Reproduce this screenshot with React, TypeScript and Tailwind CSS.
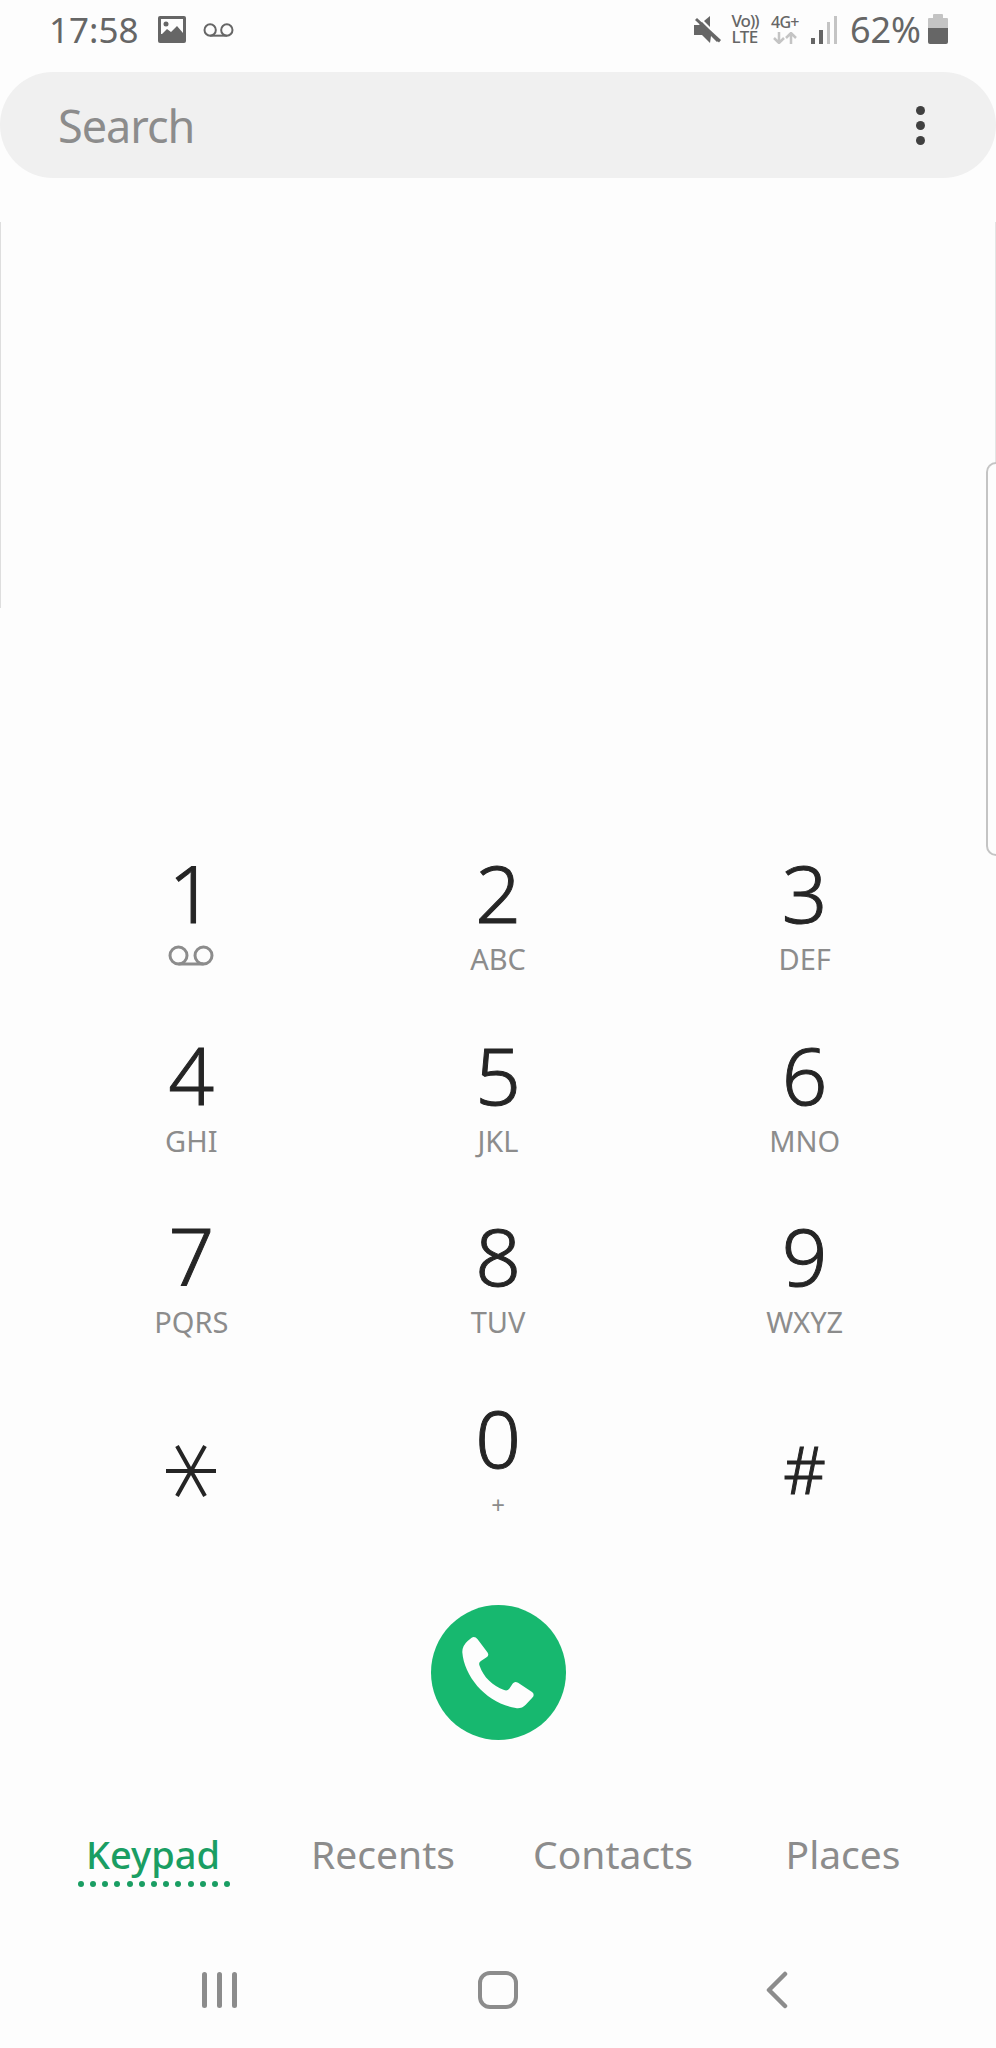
const FONT = 'font-["Noto_Sans",sans-serif]';

const keys = [
  { digit: '1', sub: 'vm' },
  { digit: '2', sub: 'ABC' },
  { digit: '3', sub: 'DEF' },
  { digit: '4', sub: 'GHI' },
  { digit: '5', sub: 'JKL' },
  { digit: '6', sub: 'MNO' },
  { digit: '7', sub: 'PQRS' },
  { digit: '8', sub: 'TUV' },
  { digit: '9', sub: 'WXYZ' },
];

const tabs = ['Keypad', 'Recents', 'Contacts', 'Places'];

function Voicemail({ className }: { className: string }) {
  return (
    <svg viewBox="0 0 46 21" fill="none" stroke="currentColor" strokeWidth="3" className={className}>
      <circle cx="10.5" cy="10.5" r="8.5" />
      <circle cx="35.5" cy="10.5" r="8.5" />
      <path d="M10.5 19h25" />
    </svg>
  );
}

function StatusBar() {
  return (
    <div className="flex h-[72px] items-start justify-between pl-[49px] pr-[48px] text-[#666666]">
      <div className="flex items-center">
        <span className="h-[60px] text-[35px] leading-[60px]">17:58</span>
        <svg viewBox="0 0 28 27" className="ml-[20px] mt-[-2px] h-[27px] w-[28px]">
          <rect x="0" y="0" width="28" height="27" rx="2" fill="#666666" />
          <rect x="3" y="3" width="22" height="15" fill="#fdfdfd" />
          <circle cx="8" cy="8" r="2.5" fill="#666666" />
          <path d="M3 19l6-6 4 3 6-6 6 7v3H3z" fill="#666666" />
        </svg>
        <Voicemail className="ml-[17px] mt-[-1px] h-[14px] w-[31px]" />
      </div>
      <div className="flex items-start">
        <svg viewBox="0 0 28 28" className="mt-[15px] h-[28px] w-[28px]" fill="#666666">
          <path d="M0 10h5l3-3 17 18-2 2-6-6-1 7-8-8H0z" />
          <path d="M16 1v11l-6-6z" />
          <path d="M3 3l24 22-2 2.500L1 5z" />
        </svg>
        <div className="ml-[9.5px] mt-[13px] flex w-[30px] flex-col items-start text-[17px] font-medium leading-[16px]">
          <span className="tracking-[-1px]">Vo))</span>
          <span className="tracking-[-0.5px]">LTE</span>
        </div>
        <div className="ml-[8px] mt-[14px] flex w-[31px] flex-col items-center">
          <span className="text-[16px] font-medium leading-[16px] tracking-[-0.8px]">4G+</span>
          <svg viewBox="0 0 28 12" className="mt-[2px] h-[12px] w-[28px]" fill="none" stroke="#c4c4c4" strokeWidth="2.500">
            <path d="M8 0v10M3 6l5 5 5-5" />
            <path d="M20 12V2M15 6l5-5 5 5" />
          </svg>
        </div>
        <div className="ml-[10.5px] mt-[14px] flex h-[30px] items-end gap-[4px]">
          <span className="h-[6px] w-[4px] bg-[#666666]" />
          <span className="h-[14px] w-[4px] bg-[#666666]" />
          <span className="h-[22px] w-[3px] bg-[#c4c4c4]" />
          <span className="h-[28px] w-[3px] bg-[#c4c4c4]" />
        </div>
        <span className="ml-[13px] h-[60px] text-[36px] leading-[60px]">62%</span>
        <div className="ml-[7px] mt-[14px] flex w-[20px] flex-col items-center">
          <span className="h-[4px] w-[10px] rounded-t-[1px] bg-[#c4c4c4]" />
          <span className="h-[10px] w-full rounded-t-[1px] bg-[#c4c4c4]" />
          <span className="h-[16px] w-full rounded-b-[2px] bg-[#666666]" />
        </div>
      </div>
    </div>
  );
}

function SearchBar() {
  return (
    <div className="flex h-[106px] items-center justify-between rounded-full bg-[#f0f0f0] pl-[58px] pr-[71px]">
      <span className="mt-[2px] text-[45px] leading-[104px] tracking-[-1px] text-[#8c8c8c]">Search</span>
      <div className="flex flex-col gap-[6px]">
        <span className="h-[9px] w-[9px] rounded-full bg-[#404040]" />
        <span className="h-[9px] w-[9px] rounded-full bg-[#404040]" />
        <span className="h-[9px] w-[9px] rounded-full bg-[#404040]" />
      </div>
    </div>
  );
}

function Key({ digit, sub }: { digit: string; sub: string }) {
  return (
    <div className="flex flex-col items-center">
      <span className="h-[80px] text-[80px] font-light leading-[80px] text-[#252525] [-webkit-text-stroke:1px_#252525]">{digit}</span>
      {sub === 'vm' ? (
        <div className="mt-[3px] flex h-[40px] items-center">
          <Voicemail className="h-[21px] w-[46px] text-[#8c8c8c]" />
        </div>
      ) : (
        <span className="mt-[7px] h-[40px] text-[29px] leading-[40px] text-[#8c8c8c]">{sub}</span>
      )}
    </div>
  );
}

function Keypad() {
  return (
    <div className="mt-[674px] grid grid-cols-3 auto-rows-[181.5px] px-[38px]">
      {keys.map((k) => (
        <Key key={k.digit} digit={k.digit} sub={k.sub} />
      ))}
      <div className="flex justify-center pt-[48px]">
        <svg viewBox="0 0 50 52" className="h-[52px] w-[50px]" fill="none" stroke="#252525" strokeWidth="4">
          <path d="M0 26h50M11 1l28 50M39 1L11 51" />
        </svg>
      </div>
      <div className="flex flex-col items-center">
        <span className="h-[80px] text-[80px] font-light leading-[80px] text-[#252525] [-webkit-text-stroke:1px_#252525]">0</span>
        <span className="mt-[8px] h-[40px] text-[24px] leading-[40px] text-[#8c8c8c]">+</span>
      </div>
      <div className="flex justify-center pt-[33px]">
        <span className="h-[76px] text-[66px] font-light leading-[76px] text-[#252525] [-webkit-text-stroke:1px_#252525]">#</span>
      </div>
    </div>
  );
}

function CallButton() {
  return (
    <div className="mt-[27px] flex justify-center">
      <div className="flex h-[135px] w-[135px] items-center justify-center rounded-full bg-[#17b86f]">
        <svg viewBox="993 735 220 220" className="h-[73px] w-[73px]" fill="#fdfdfd">
          <path d="M1022 740Q1032 735 1040 745L1070 785Q1076 795 1066 800L1050 810Q1042 815 1046 825C1058 860 1085 885 1120 898Q1130 902 1136 893L1146 878Q1152 870 1162 876L1204 904Q1214 912 1204 922L1185 942Q1172 955 1155 952C1070 940 1000 860 994 785Q993 765 1010 750Z" />
        </svg>
      </div>
    </div>
  );
}

function Tabs() {
  return (
    <div className="mt-[88px] grid grid-cols-4 px-[38px]">
      {tabs.map((t, i) => (
        <div key={t} className="flex h-[65px] flex-col items-center">
          <span
            className={
              i === 0
                ? 'h-[53px] text-[38px] font-medium leading-[52px] text-[#1a9e63]'
                : 'h-[53px] text-[39px] leading-[52px] text-[#8c8c8c]'
            }
          >
            {t}
          </span>
          {i === 0 && (
            <div className="ml-[2px] flex gap-[6.2px]">
              {Array.from({ length: 13 }).map((_, d) => (
                <span key={d} className="h-[6px] w-[6px] rounded-full bg-[#1a9e63]" />
              ))}
            </div>
          )}
        </div>
      ))}
    </div>
  );
}

function NavBar() {
  return (
    <div className="mt-[78px] flex h-[38px] items-center justify-between pl-[202px] pr-[208px]">
      <div className="flex gap-[10px]">
        <span className="h-[36px] w-[5px] rounded-full bg-[#8c8c8c]" />
        <span className="h-[36px] w-[5px] rounded-full bg-[#8c8c8c]" />
        <span className="h-[36px] w-[5px] rounded-full bg-[#8c8c8c]" />
      </div>
      <span className="ml-[-7px] h-[38px] w-[40px] rounded-[12px] border-[4px] border-[#8c8c8c]" />
      <svg viewBox="0 0 22 38" className="h-[38px] w-[22px]" fill="none" stroke="#8c8c8c" strokeWidth="4.500" strokeLinecap="round" strokeLinejoin="round">
        <path d="M19 3L3 19l16 16" />
      </svg>
    </div>
  );
}

export default function App() {
  return (
    <div className={`relative h-[2048px] w-[996px] overflow-hidden bg-[#fdfdfd] ${FONT}`}>
      <StatusBar />
      <SearchBar />
      <Keypad />
      <CallButton />
      <Tabs />
      <NavBar />
      {/* edge panels peeking in at the sides */}
      <div className="absolute left-0 top-[222px] h-[386px] w-px bg-[#dedede]" />
      <div className="absolute right-0 top-[222px] h-[386px] w-px bg-[#e4e4e4]" />
      <div className="absolute right-0 top-[462px] h-[394px] w-[10px] rounded-l-[10px] border-y-2 border-l-2 border-[#c4c4c4] bg-[#fdfdfd]" />
    </div>
  );
}
